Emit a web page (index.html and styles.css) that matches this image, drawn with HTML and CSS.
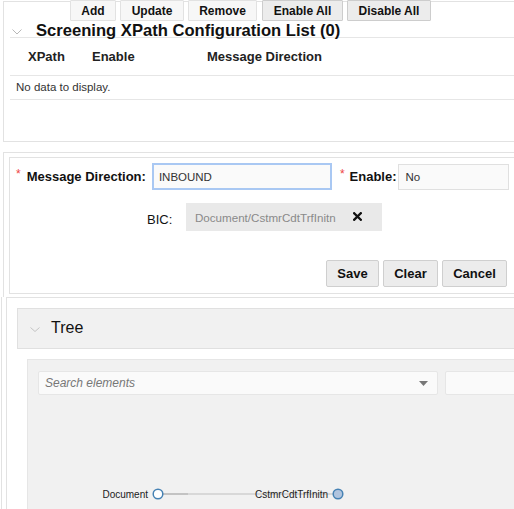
FILE: index.html
```html
<!DOCTYPE html>
<html>
<head>
<meta charset="utf-8">
<link rel="stylesheet" href="styles.css">
</head>
<body>
<div class="page">
  <section class="panel1">
    <div class="toolbar">
      <button class="tbtn">Add</button>
      <button class="tbtn">Update</button>
      <button class="tbtn">Remove</button>
      <button class="tbtn dark">Enable All</button>
      <button class="tbtn dark">Disable All</button>
    </div>
    <div class="list-head">
      <svg class="chev" width="10" height="6" viewBox="0 0 10 6"><polyline points="0.5,0.5 5,5 9.5,0.5" fill="none" stroke="#b8b8b8" stroke-width="1"/></svg>
      <span class="list-title">Screening XPath Configuration List (0)</span>
    </div>
    <div class="grid-head">
      <span>XPath</span><span>Enable</span><span>Message Direction</span>
    </div>
    <div class="grid-empty">No data to display.</div>
    <div class="filler"></div>
  </section>

  <section class="panel2">
    <div class="form">
      <div class="row1">
        <span class="req">*</span>
        <label class="lbl">Message Direction:</label>
        <div class="inp focus">INBOUND</div>
        <span class="req req2">*</span>
        <label class="lbl">Enable:</label>
        <div class="inp small">No</div>
      </div>
      <div class="row2">
        <label class="bic-lbl">BIC:</label>
        <div class="bic-box">
          <span>Document/CstmrCdtTrfInitn</span>
          <svg class="x" width="9" height="9" viewBox="0 0 9 9"><path d="M1.2 1.2 L7.8 7.8 M7.8 1.2 L1.2 7.8" stroke="#111" stroke-width="2.3" stroke-linecap="square"/></svg>
        </div>
      </div>
      <div class="row3">
        <button class="fbtn">Save</button>
        <button class="fbtn">Clear</button>
        <button class="fbtn">Cancel</button>
      </div>
    </div>
  </section>

  <section class="panel3">
    <div class="inner3">
      <div class="acc">
        <div class="acc-head">
          <svg class="chev2" width="10" height="5" viewBox="0 0 10 5"><polyline points="0.5,0.5 5,4.5 9.5,0.5" fill="none" stroke="#c4c4c4" stroke-width="1"/></svg>
          <span class="acc-title">Tree</span>
        </div>
        <div class="acc-body">
          <div class="canvas">
            <div class="search-row">
              <div class="search">
                <span class="ph">Search elements</span>
                <svg width="9" height="5" viewBox="0 0 9 5"><polygon points="0,0 9,0 4.5,5" fill="#777"/></svg>
              </div>
              <div class="search2"></div>
            </div>
            <svg class="tree" width="486" height="114" viewBox="0 0 486 114">
              <line x1="135" y1="99" x2="305" y2="99" stroke="#cfcfcf" stroke-width="1.5"/>
              <line x1="135" y1="99" x2="160" y2="99" stroke="#bdbdbd" stroke-width="1.5"/>
              <circle cx="130" cy="99" r="4.8" fill="#fff" stroke="#4682b4" stroke-width="1.5"/>
              <circle cx="310" cy="99" r="4.8" fill="#b0c4de" stroke="#4682b4" stroke-width="1.5"/>
              <text x="120" y="99" dy=".35em" text-anchor="end" class="node">Document</text>
              <text x="300" y="99" dy=".35em" text-anchor="end" class="node">CstmrCdtTrfInitn</text>
            </svg>
          </div>
        </div>
      </div>
    </div>
  </section>
</div>
</body>
</html>
```
FILE: styles.css
```css
html, body {
  margin: 0;
  padding: 0;
  background: #fff;
}
body {
  font-family: "Liberation Sans", Arial, sans-serif;
  color: #1a1a1a;
}
.page {
  width: 514px;
  height: 509px;
  overflow: hidden;
}
button {
  font-family: "Liberation Sans", Arial, sans-serif;
  cursor: pointer;
}

/* panel 1 */
.panel1 {
  margin: 1px 0 0 3px;
  width: 540px;
  border: 1px solid #e2e2e2;
  box-sizing: border-box;
}
.toolbar {
  margin-top: -2px;
  padding-left: 66px;
  display: flex;
  gap: 4px;
  height: 21px;
}
.tbtn {
  height: 21px;
  padding: 0 10px;
  border: 1px solid #e2e2e2;
  background: #f7f7f7;
  font-size: 12px;
  font-weight: bold;
  color: #111;
  border-radius: 1px;
  line-height: 20px;
}
.tbtn:nth-child(1) { width: 46px; padding: 0; }
.tbtn:nth-child(2) { width: 64px; padding: 0; }
.tbtn:nth-child(3) { width: 69px; padding: 0; }
.tbtn.dark {
  background: #ececec;
  border-color: #cdcdcd;
}
.tbtn.dark:nth-child(4) { width: 81px; padding: 0; margin-left: 1px; }
.tbtn.dark:nth-child(5) { width: 84px; padding: 0; }
.list-head {
  margin-left: 6px;
  height: 14px;
  padding: 2px 0 0 2px;
  border-bottom: 1px solid #e6e6e6;
  display: flex;
  align-items: flex-start;
  line-height: 16px;
}
.chev {
  margin-top: 6px;
  flex: none;
}
.list-title {
  margin-left: 14px;
  font-size: 16.6px;
  font-weight: bold;
  color: #111;
  white-space: nowrap;
}
.grid-head {
  margin-left: 6px;
  height: 37px;
  border-bottom: 1px solid #e6e6e6;
  display: grid;
  grid-template-columns: 64px 115px auto;
  align-items: center;
  padding-left: 18px;
  font-size: 13px;
  font-weight: bold;
  color: #222;
}
.grid-empty {
  margin-left: 6px;
  height: 23px;
  border-bottom: 1px solid #e6e6e6;
  padding-left: 6px;
  font-size: 11.5px;
  line-height: 23px;
  color: #333;
}
.filler {
  height: 41px;
}

/* panel 2 */
.panel2 {
  margin: 10px 0 0 3px;
  width: 540px;
  border: 1px solid #e2e2e2;
  border-bottom: none;
  box-sizing: border-box;
  padding: 4px 0 3px 5px;
}
.form {
  border: 1px solid #e2e2e2;
  padding: 5px 0 6px 6px;
}
.row1 {
  display: flex;
  align-items: center;
  height: 27px;
}
.req {
  align-self: flex-start;
  margin-top: 6px;
  color: #ee4444;
  font-size: 12px;
  line-height: 10px;
  margin-right: 6px;
}
.req2 {
  margin-left: 8px;
  margin-right: 5px;
}
.lbl {
  font-size: 13px;
  font-weight: bold;
  color: #111;
  white-space: nowrap;
}
.inp {
  box-sizing: border-box;
  height: 27px;
  margin-left: 6px;
  width: 180px;
  border: 1px solid #e0e0e0;
  background: #fafafa;
  font-size: 11.5px;
  color: #333;
  padding-left: 7px;
  display: flex;
  align-items: center;
}
.inp.focus {
  border: 2px solid #a9c8f3;
  padding-left: 5px;
}
.inp.small {
  margin-left: 1px;
  width: 111px;
  height: 26px;
  margin-top: 1px;
}
.row2 {
  display: flex;
  margin-top: 13px;
  padding-left: 131px;
}
.bic-lbl {
  align-self: flex-end;
  margin-bottom: 3px;
  font-size: 13px;
  line-height: 16px;
  color: #111;
  width: 25px;
}
.bic-box {
  margin-left: 14px;
  width: 196px;
  height: 28px;
  background: #e9e9e9;
  display: flex;
  align-items: center;
  padding-left: 9px;
  box-sizing: border-box;
  font-size: 11.6px;
  color: #8a8a8a;
}
.bic-box .x {
  margin-left: 17px;
  margin-top: -2px;
}
.row3 {
  display: flex;
  gap: 4px;
  margin-top: 29px;
  padding-left: 310px;
}
.fbtn {
  height: 27px;
  padding: 0;
  border: 1px solid #cfcfcf;
  background: #ececec;
  border-radius: 2px;
  font-size: 13px;
  font-weight: bold;
  color: #111;
}
.fbtn:nth-child(1) { width: 53px; }
.fbtn:nth-child(2) { width: 55px; }
.fbtn:nth-child(3) { width: 65px; }

/* panel 3 */
.panel3 {
  margin-left: 1px;
  border-left: 1px solid #e2e2e2;
  padding-left: 4px;
  width: 540px;
  box-sizing: border-box;
}
.inner3 {
  border-left: 1px solid #e2e2e2;
  border-top: 1px solid #e2e2e2;
  padding: 10px 0 0 10px;
  height: 220px;
}
.acc-head {
  height: 39px;
  border: 1px solid #e0e0e0;
  background: #f1f1f1;
  display: flex;
  align-items: center;
  padding-left: 12px;
}
.chev2 {
  flex: none;
  margin-top: 1px;
}
.acc-title {
  margin-left: 11px;
  font-size: 16px;
  color: #111;
  margin-top: -1px;
}
.acc-body {
  padding: 10px 0 0 10px;
}
.canvas {
  border: 1px solid #e6e6e6;
  background: #f1f1f1;
  height: 200px;
}
.search-row {
  display: flex;
  gap: 7px;
  padding: 11px 0 0 10px;
}
.search {
  box-sizing: border-box;
  width: 400px;
  height: 24px;
  border: 1px solid #e6e6e6;
  border-radius: 2px;
  background: #fafafa;
  display: flex;
  align-items: center;
  justify-content: space-between;
  padding: 0 9px 0 6px;
}
.ph {
  font-size: 12px;
  font-style: italic;
  color: #777;
}
.search2 {
  flex: 1;
  height: 24px;
  box-sizing: border-box;
  border: 1px solid #e6e6e6;
  border-radius: 2px;
  background: #fafafa;
}
.tree {
  display: block;
}
.node {
  font-family: "Liberation Sans", Arial, sans-serif;
  font-size: 10px;
  fill: #222;
}
```
